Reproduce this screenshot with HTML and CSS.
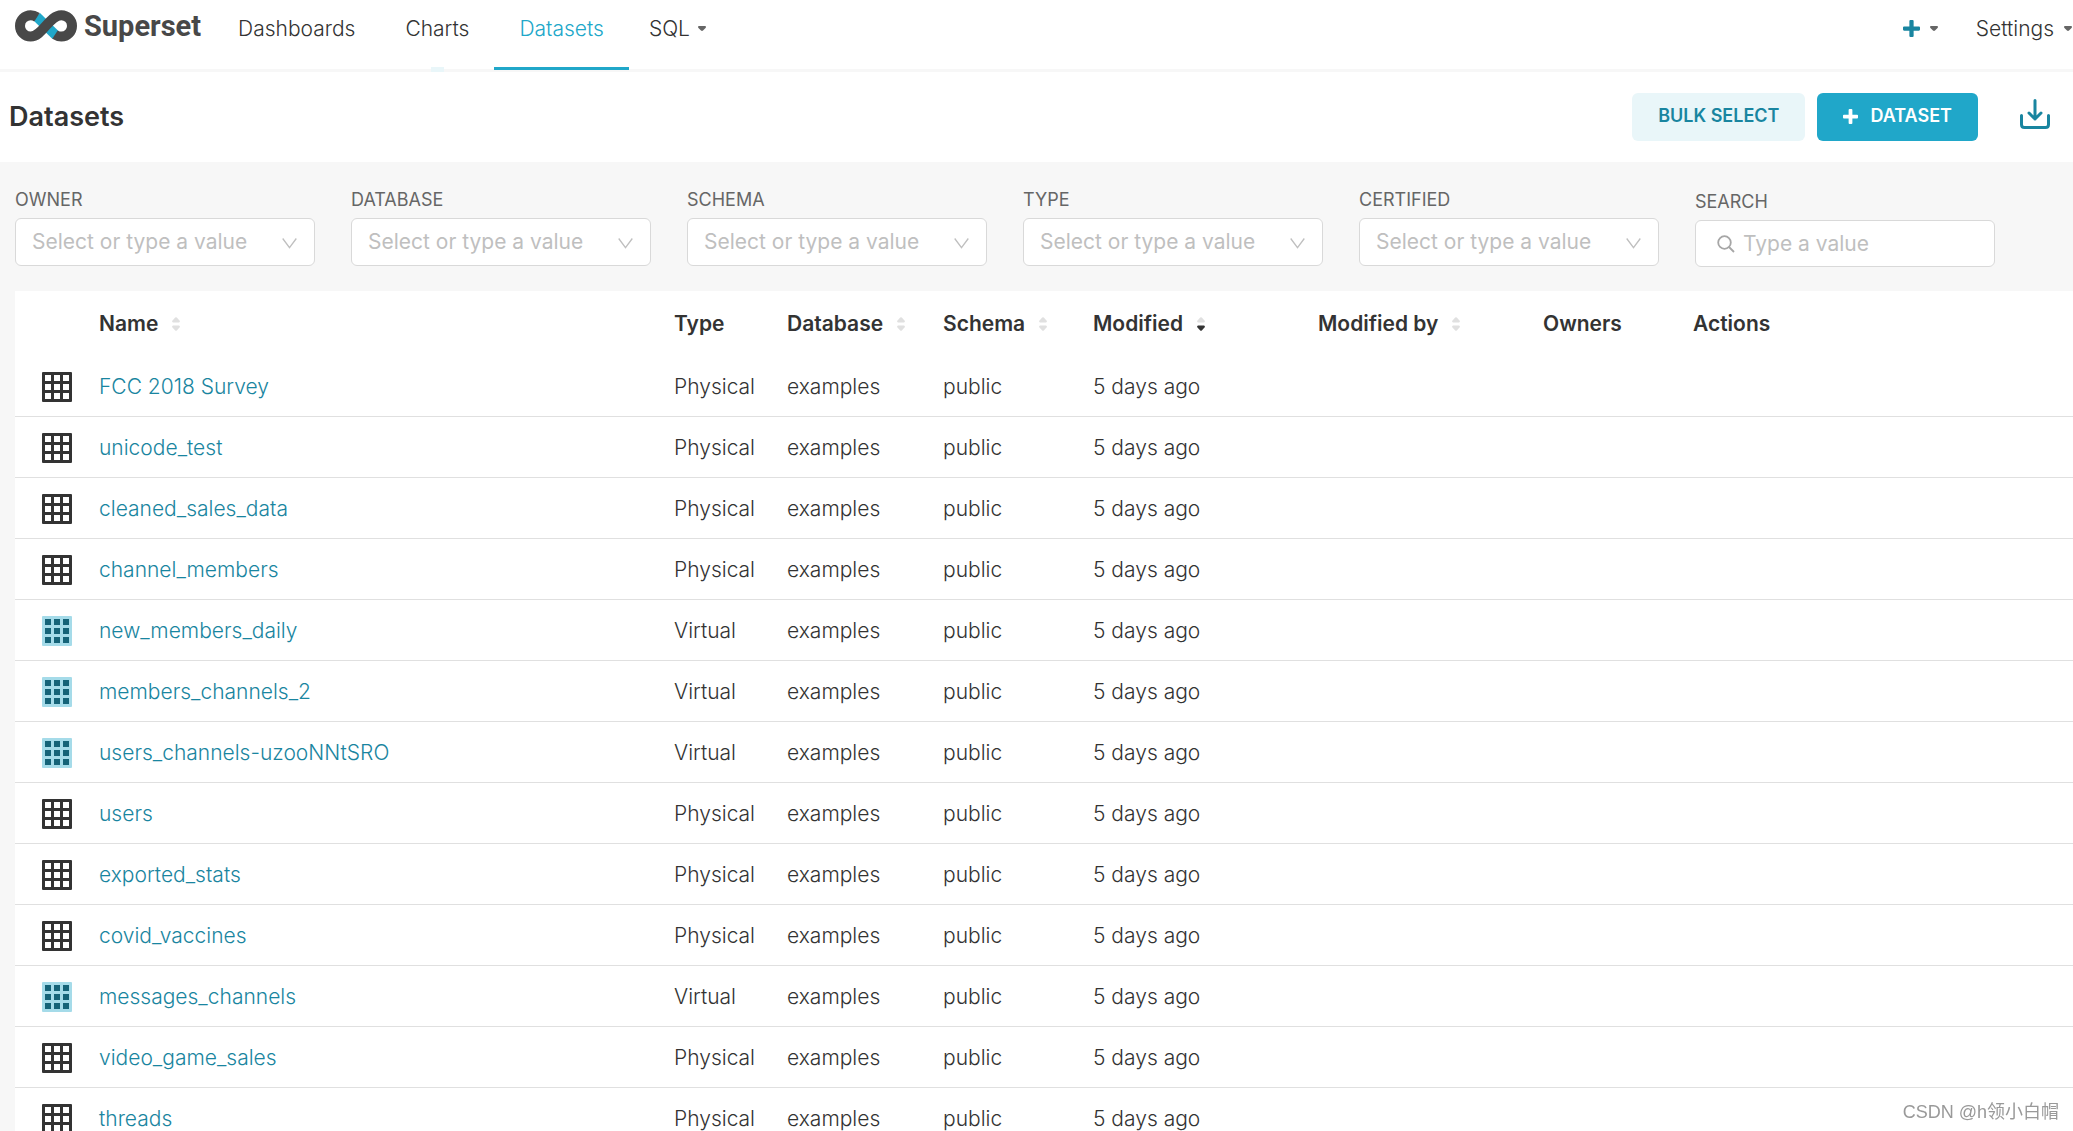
FILE: index.html
```html
<!DOCTYPE html>
<html lang="en">
<head>
<meta charset="utf-8">
<title>Superset</title>
<link rel="stylesheet" href="styles.css">
</head>
<body>
<svg class="defs" width="0" height="0" aria-hidden="true">
  <symbol id="caret" viewBox="0 0 8 5"><path d="M1 0h6q1 0 1 1-.2.8-.7 1.200L5 4.600q-1 .8-2 0L.7 2.200Q.2 1.800 0 1q0-1 1-1z"/></symbol>
  <symbol id="plus" viewBox="0 0 16 16"><path d="M6 1q0-1 1-1h2q1 0 1 1v5h5q1 0 1 1v2q0 1-1 1h-5v5q0 1-1 1H7q-1 0-1-1v-5H1q-1 0-1-1V7q0-1 1-1h5z"/></symbol>
  <symbol id="chevron" viewBox="0 0 15 11"><path d="M.7.500 7.500 9.700 14.300.5" fill="none" stroke="currentColor" stroke-width="1.300"/></symbol>
  <symbol id="sort-up" viewBox="0 0 8 14"><path d="M3.200.6q.8-.8 1.600 0l2.700 3q1 1.400-.5 1.900H1Q-.5 5 .5 3.600z"/></symbol>
  <symbol id="sort-down" viewBox="0 0 8 14"><path d="M3.200 13.400q.8.8 1.600 0l2.700-3q1-1.400-.5-1.900H1q-1.500.5-.5 1.900z"/></symbol>
  <symbol id="physical" viewBox="0 0 30 30"><path fill-rule="evenodd" d="M1 0h28q1 0 1 1v28q0 1-1 1H1q-1 0-1-1V1q0-1 1-1zM3 3v6h6V3zM12 3v6h6V3zM21 3v6h6V3zM3 12v6h6v-6zM12 12v6h6v-6zM21 12v6h6v-6zM3 21v6h6v-6zM12 21v6h6v-6zM21 21v6h6v-6z"/></symbol>
  <symbol id="virtual" viewBox="0 0 30 30"><rect width="30" height="30" rx="1" fill="#a5dbe9"/><path fill="#156378" d="M3 3v6h6V3zM12 3v6h6V3zM21 3v6h6V3zM3 12v6h6v-6zM12 12v6h6v-6zM21 12v6h6v-6zM3 21v6h6v-6zM12 21v6h6v-6zM21 21v6h6v-6z"/></symbol>
</svg>
<header class="navbar">
  <a class="brand" href="#">
    <svg width="62" height="32" viewBox="0 0 62 32" fill="none" stroke-width="10" aria-hidden="true">
      <path d="M21.500 6.500 41 25.500" stroke="#20a7c9"/>
      <path d="M22 7.200C20 5.900 18 5.200 15.700 5.200a10.700 10.700 0 0 0 0 21.400C27.500 26.600 34 5.200 46.300 5.200a10.700 10.700 0 0 1 0 21.400c-2.300 0-4.300-.7-6.300-2" stroke="#484848"/>
    </svg>
    <span>Superset</span>
  </a>
  <nav class="menu">
    <a href="#">Dashboards</a>
    <a class="leaving" href="#">Charts</a>
    <a class="active" href="#" aria-current="page">Datasets</a>
    <button type="button">SQL <svg class="caret"><use href="#caret"/></svg></button>
  </nav>
  <div class="menu right">
    <button type="button" aria-label="New"><svg class="plus"><use href="#plus"/></svg><svg class="caret"><use href="#caret"/></svg></button>
    <button type="button">Settings <svg class="caret"><use href="#caret"/></svg></button>
  </div>
</header>
<section class="titlebar">
  <h1>Datasets</h1>
  <div class="tools">
    <button class="btn secondary" type="button">BULK SELECT</button>
    <button class="btn primary" type="button"><svg class="plus"><use href="#plus"/></svg>DATASET</button>
    <button class="import" type="button" aria-label="Import datasets">
      <svg width="30" height="30" viewBox="0 0 30 30" fill="none" stroke="currentColor" stroke-width="3" stroke-linecap="round" stroke-linejoin="round"><path d="M15 1.500v18.500M9 14l6 6 6-6M1.500 16.500v9q0 3 3 3h21q3 0 3-3v-9"/></svg>
    </button>
  </div>
</section>
<main>
  <form class="filters">
    <div class="field"><label for="owner">OWNER</label><div class="box"><select id="owner"><option>Select or type a value</option></select><svg class="chevron"><use href="#chevron"/></svg></div></div>
    <div class="field"><label for="database">DATABASE</label><div class="box"><select id="database"><option>Select or type a value</option></select><svg class="chevron"><use href="#chevron"/></svg></div></div>
    <div class="field"><label for="schema">SCHEMA</label><div class="box"><select id="schema"><option>Select or type a value</option></select><svg class="chevron"><use href="#chevron"/></svg></div></div>
    <div class="field"><label for="type">TYPE</label><div class="box"><select id="type"><option>Select or type a value</option></select><svg class="chevron"><use href="#chevron"/></svg></div></div>
    <div class="field"><label for="certified">CERTIFIED</label><div class="box"><select id="certified"><option>Select or type a value</option></select><svg class="chevron"><use href="#chevron"/></svg></div></div>
    <div class="field search"><label for="search">SEARCH</label><div class="box"><svg class="glass" viewBox="0 0 18 18" stroke="currentColor" stroke-width="1.800"><circle cx="7.500" cy="7.500" r="6.300"/><path d="m12 12 5 5"/></svg><input id="search" type="text" placeholder="Type a value"></div></div>
  </form>
  <table class="list">
    <colgroup><col class="c-icon"><col><col class="c-type"><col class="c-database"><col class="c-schema"><col class="c-modified"><col class="c-modified"><col class="c-owners"><col class="c-actions"></colgroup>
    <thead>
      <tr>
        <th></th>
        <th>Name<svg class="sort"><use href="#sort-up"/><use href="#sort-down"/></svg></th>
        <th>Type</th>
        <th>Database<svg class="sort"><use href="#sort-up"/><use href="#sort-down"/></svg></th>
        <th>Schema<svg class="sort"><use href="#sort-up"/><use href="#sort-down"/></svg></th>
        <th>Modified<svg class="sort desc"><use href="#sort-up"/><use href="#sort-down"/></svg></th>
        <th>Modified by<svg class="sort"><use href="#sort-up"/><use href="#sort-down"/></svg></th>
        <th>Owners</th>
        <th>Actions</th>
      </tr>
    </thead>
    <tbody>
      <tr><td><svg class="kind"><use href="#physical"/></svg></td><td><a href="#">FCC 2018 Survey</a></td><td>Physical</td><td>examples</td><td>public</td><td>5 days ago</td><td></td><td></td><td></td></tr>
      <tr><td><svg class="kind"><use href="#physical"/></svg></td><td><a href="#">unicode_test</a></td><td>Physical</td><td>examples</td><td>public</td><td>5 days ago</td><td></td><td></td><td></td></tr>
      <tr><td><svg class="kind"><use href="#physical"/></svg></td><td><a href="#">cleaned_sales_data</a></td><td>Physical</td><td>examples</td><td>public</td><td>5 days ago</td><td></td><td></td><td></td></tr>
      <tr><td><svg class="kind"><use href="#physical"/></svg></td><td><a href="#">channel_members</a></td><td>Physical</td><td>examples</td><td>public</td><td>5 days ago</td><td></td><td></td><td></td></tr>
      <tr><td><svg class="kind"><use href="#virtual"/></svg></td><td><a href="#">new_members_daily</a></td><td>Virtual</td><td>examples</td><td>public</td><td>5 days ago</td><td></td><td></td><td></td></tr>
      <tr><td><svg class="kind"><use href="#virtual"/></svg></td><td><a href="#">members_channels_2</a></td><td>Virtual</td><td>examples</td><td>public</td><td>5 days ago</td><td></td><td></td><td></td></tr>
      <tr><td><svg class="kind"><use href="#virtual"/></svg></td><td><a href="#">users_channels-uzooNNtSRO</a></td><td>Virtual</td><td>examples</td><td>public</td><td>5 days ago</td><td></td><td></td><td></td></tr>
      <tr><td><svg class="kind"><use href="#physical"/></svg></td><td><a href="#">users</a></td><td>Physical</td><td>examples</td><td>public</td><td>5 days ago</td><td></td><td></td><td></td></tr>
      <tr><td><svg class="kind"><use href="#physical"/></svg></td><td><a href="#">exported_stats</a></td><td>Physical</td><td>examples</td><td>public</td><td>5 days ago</td><td></td><td></td><td></td></tr>
      <tr><td><svg class="kind"><use href="#physical"/></svg></td><td><a href="#">covid_vaccines</a></td><td>Physical</td><td>examples</td><td>public</td><td>5 days ago</td><td></td><td></td><td></td></tr>
      <tr><td><svg class="kind"><use href="#virtual"/></svg></td><td><a href="#">messages_channels</a></td><td>Virtual</td><td>examples</td><td>public</td><td>5 days ago</td><td></td><td></td><td></td></tr>
      <tr><td><svg class="kind"><use href="#physical"/></svg></td><td><a href="#">video_game_sales</a></td><td>Physical</td><td>examples</td><td>public</td><td>5 days ago</td><td></td><td></td><td></td></tr>
      <tr><td><svg class="kind"><use href="#physical"/></svg></td><td><a href="#">threads</a></td><td>Physical</td><td>examples</td><td>public</td><td>5 days ago</td><td></td><td></td><td></td></tr>
    </tbody>
  </table>
</main>
<div class="watermark">CSDN @h领小白帽</div>
</body>
</html>
```
FILE: styles.css
```css
* { box-sizing: border-box; }

body {
  display: flex;
  flex-direction: column;
  height: 100vh;
  margin: 0;
  overflow: hidden;
  background: #f7f7f7;
  color: #333;
  font: 300 21px/30px Inter, "Liberation Sans", sans-serif;
}

a { color: inherit; text-decoration: none; }

button, input, select {
  margin: 0;
  padding: 0;
  border: 0;
  background: none;
  color: inherit;
  font: inherit;
}

svg { flex: none; fill: currentColor; }
.defs { position: absolute; }

/* Top navigation */
.navbar {
  display: flex;
  flex: none;
  height: 72px;
  padding-left: 15px;
  border-bottom: 3px solid #f7f7f7;
  background: #fff;
}

.brand {
  display: flex;
  gap: 7px;
  align-items: center;
  height: 52px;
  margin-right: 12px;
  color: #484848;
  font: bold 29px/32px Roboto, sans-serif;
}

.brand svg { fill: none; }

.menu { display: flex; }

.menu > * {
  display: flex;
  position: relative;
  gap: 8px;
  align-items: center;
  height: 69px;
  padding: 0 25px 12px;
}

.menu button { padding-left: 20px; }
.menu .active { color: #20a7c9; }

.menu .active::after,
.menu .leaving::after {
  position: absolute;
  right: 0;
  bottom: -1px;
  left: 0;
  height: 3px;
  background: #20a7c9;
  content: "";
}

.menu .leaving::after {
  right: 50px;
  bottom: -3px;
  left: 51px;
  height: 5px;
  background: #e9f6f9;
}

.caret { width: 8px; height: 5px; color: #666; }

.menu.right { gap: 36px; margin-left: auto; }
.menu.right > * { gap: 10px; padding: 0 1px 12px; }
.menu .plus { width: 17px; height: 17px; color: #1985a0; }

/* Page heading and its actions */
.titlebar {
  display: flex;
  flex: none;
  align-items: center;
  justify-content: space-between;
  height: 90px;
  padding: 0 17px 0 9px;
  background: #fff;
}

h1 { margin: 0; font-size: 27px; font-weight: 600; line-height: 36px; }

.tools { display: flex; gap: 12px; align-items: center; }

.btn {
  display: flex;
  gap: 12px;
  align-items: center;
  justify-content: center;
  height: 48px;
  padding: 0 26px 2px;
  border-radius: 6px;
  font-size: 18px;
  font-weight: 600;
}

.secondary { background: #e9f6f9; color: #1985a0; }
.primary { background: #20a7c9; color: #fff; }
.btn .plus { width: 15px; height: 15px; }
.import { display: flex; padding: 0 6px 6px 30px; color: #1985a0; }
.import svg { fill: none; }

/* Filters */
main { flex: 1; min-height: 0; padding: 24px 0 0 15px; }

.filters { display: flex; gap: 36px; height: 105px; }
.field { display: flex; flex: 0 1 300px; flex-direction: column; gap: 4px; min-width: 0; }
.field label { color: #666; font-size: 18px; font-weight: 400; line-height: 28px; }
.search { padding-top: 2px; }

.box {
  display: flex;
  align-items: center;
  height: 48px;
  padding: 0 17px 0 16px;
  border: 1px solid #d9d9d9;
  border-radius: 6px;
  background: #fff;
  color: #bfbfbf;
  font-weight: 400;
}

.box select { flex: 1; min-width: 0; appearance: none; }
.chevron { width: 15px; height: 11px; margin-top: 2px; }
.search .box { gap: 8px; height: 47px; padding-left: 21px; }
.glass { width: 18px; height: 18px; color: #a6a6a6; fill: none; }
.box input { flex: 1; min-width: 0; }
.box input::placeholder { color: #bfbfbf; opacity: 1; }

/* Dataset list */
.list {
  width: 100%;
  border-collapse: separate;
  border-spacing: 0;
  background: #fff;
  table-layout: fixed;
}

.c-icon { width: 78px; }
.c-type { width: 113px; }
.c-database { width: 156px; }
.c-schema { width: 150px; }
.c-modified { width: 225px; }
.c-owners { width: 150px; }
.c-actions { width: 386px; }

.list th { height: 65px; padding: 0 0 0 6px; font-weight: 600; text-align: left; white-space: nowrap; }
.list td { height: 61px; padding: 1px 0 0 6px; border-bottom: 1px solid #e0e0e0; white-space: nowrap; }
.list td:first-child { padding: 2px 0 0 27px; }
.list td a { color: #1985a0; }
.kind { display: block; width: 30px; height: 30px; }
.sort { width: 8px; height: 14px; margin-left: 14px; color: #e0e0e0; vertical-align: 0; }
.desc use:last-child { color: #333; }

.watermark {
  position: fixed;
  right: 14px;
  bottom: 6px;
  color: #999;
  font: 18px/26px "Liberation Sans", "Noto Sans CJK SC", sans-serif;
}
```
